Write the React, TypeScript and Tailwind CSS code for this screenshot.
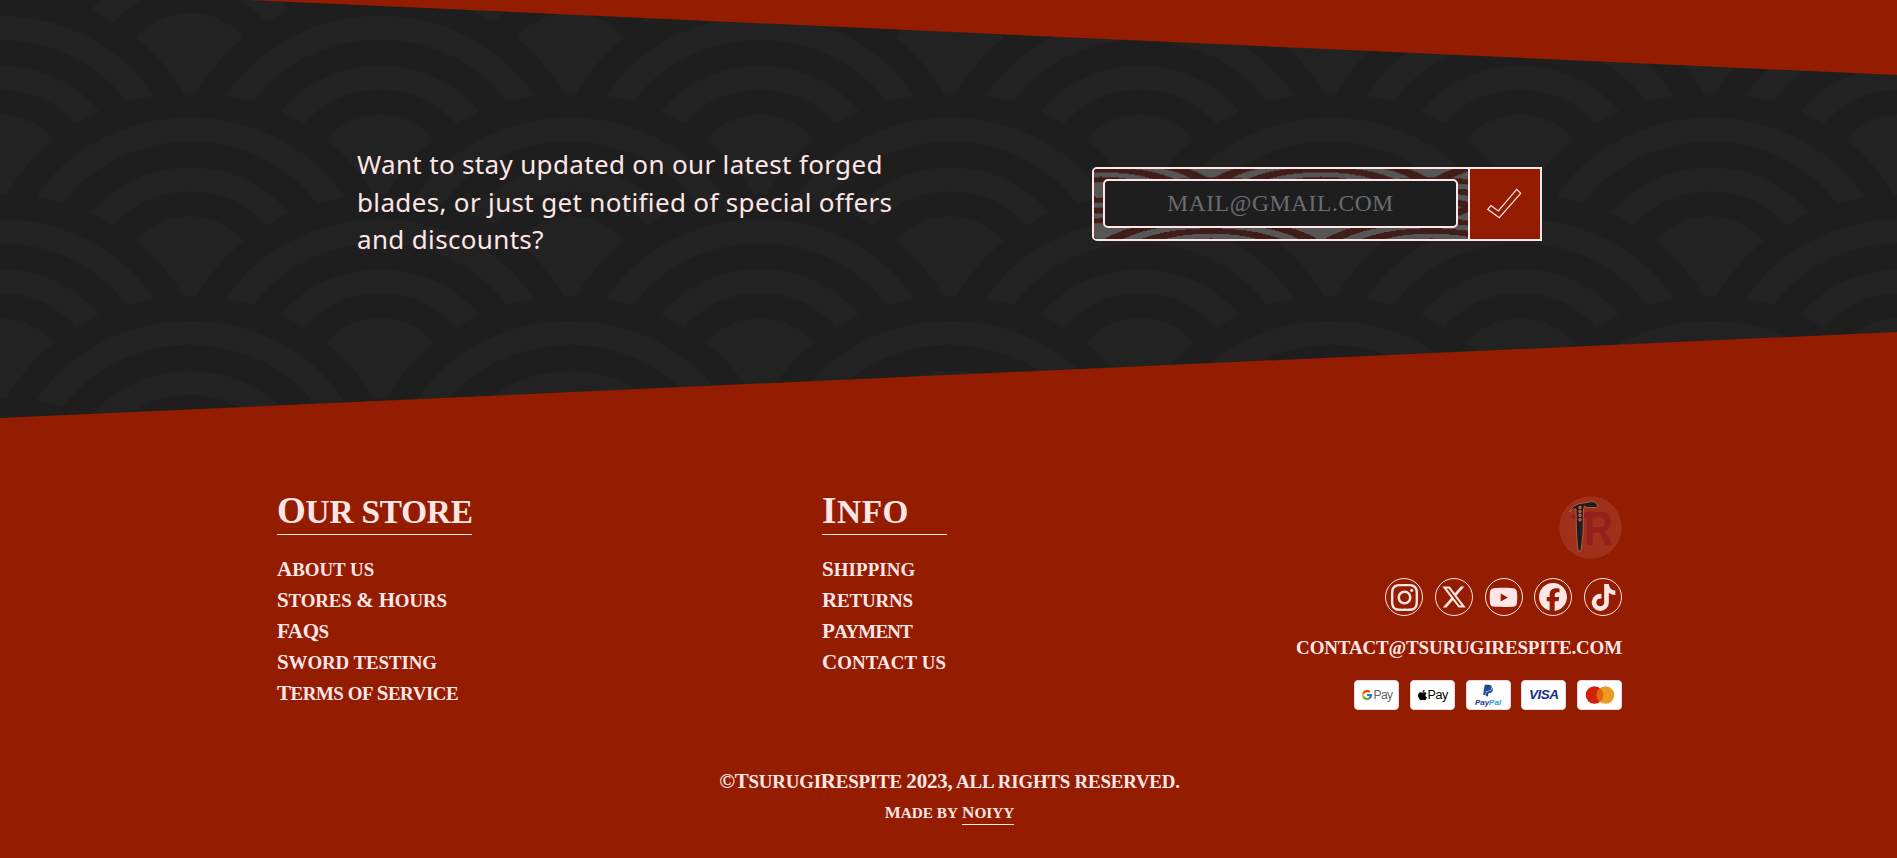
import React from "react";
import { FaInstagram, FaXTwitter, FaYoutube, FaFacebook, FaTiktok, FaApple, FaPaypal } from "react-icons/fa6";
import { FcGoogle } from "react-icons/fc";

/* One wave of the seigaiha tile: concentric ellipses, alternating dark and light. */
function Wave({ cx, cy, light, dark }: { cx: number; cy: number; light: string; dark: string }) {
  const rings = [
    [183.5, dark],
    [158.5, light],
    [135, dark],
    [108.5, light],
    [85, dark],
    [59.5, light],
  ] as const;
  return (
    <g>
      {rings.map(([r, fill]) => (
        <ellipse key={r} cx={cx} cy={cy} rx={r * 1.118} ry={r} fill={fill} />
      ))}
    </g>
  );
}

/* Repeating 380 x 203.4 tile. Lower rows cover the upper ones. */
function Waves({
  id,
  light,
  dark,
  transform,
  crisp,
}: {
  id: string;
  light: string;
  dark: string;
  transform?: string;
  crisp?: boolean;
}) {
  const rows = [-1, 0, 1, 2, 3].map((n) => ({
    cy: 72.8 + n * 101.7,
    xs: n % 2 === 0 ? [-190, 190, 570] : [0, 380],
  }));
  return (
    <svg className="absolute inset-0 h-full w-full" shapeRendering={crisp ? "crispEdges" : "auto"} aria-hidden="true">
      <defs>
        <pattern id={id} width="380" height="203.4" patternUnits="userSpaceOnUse" patternTransform={transform}>
          {rows.map((row) =>
            row.xs.map((x) => <Wave key={`${row.cy}-${x}`} cx={x} cy={row.cy} light={light} dark={dark} />),
          )}
        </pattern>
      </defs>
      <rect width="100%" height="100%" fill={`url(#${id})`} />
    </svg>
  );
}

/* Display lettering: capitals at full size, small letters as slightly lower capitals. */
function Caps({ text, className = "" }: { text: string; className?: string }) {
  const parts = text.match(/[a-z. ]+|[^a-z. ]+/g) ?? [];
  return (
    <span className={`whitespace-nowrap ${className}`}>
      {parts.map((part, i) =>
        /[a-z]/.test(part) ? (
          <span key={i} className="text-[0.9em] uppercase leading-none">
            {part}
          </span>
        ) : (
          part
        ),
      )}
    </span>
  );
}

const store = [
  { label: "About us", track: "tracking-normal" },
  { label: "Stores & Hours", track: "tracking-[-0.14px]" },
  { label: "FAQs", track: "tracking-[-0.4px]" },
  { label: "Sword testing", track: "tracking-[-0.08px]" },
  { label: "Terms of Service", track: "tracking-[-0.43px]" },
];

const info = [
  { label: "Shipping", track: "tracking-[0.1px]" },
  { label: "Returns", track: "tracking-[-0.15px]" },
  { label: "Payment", track: "tracking-[-0.7px]" },
  { label: "Contact us", track: "tracking-[0.1px]" },
];

function LinkColumn({
  title,
  items,
  width,
  track,
}: {
  title: string;
  items: { label: string; track: string }[];
  width: string;
  track: string;
}) {
  return (
    <nav className={`flex flex-col ${width}`}>
      <h2 className="h-[45px] border-b border-[#ffe6e6] text-[37px] leading-[42px]">
        <Caps text={title} className={track} />
      </h2>
      <ul className="mt-[19px] text-[21px] leading-[31px]">
        {items.map((item) => (
          <li key={item.label} className="h-[31px]">
            <a href="#">
              <Caps text={item.label} className={item.track} />
            </a>
          </li>
        ))}
      </ul>
    </nav>
  );
}

function Logo() {
  return (
    <svg viewBox="0 0 63 63" className="h-[63px] w-[63px]" role="img" aria-label="Tsurugi Respite">
      <circle cx="31.5" cy="31.5" r="31.3" fill="#a0301a" />
      <path d="M10 20 L17 24 L17 18Z M24 17 L34 15 L34 20 L24 22Z" fill="#94201c" />
      <text
        x="25"
        y="49"
        fontFamily="Liberation Sans"
        fontWeight="700"
        fontSize="48"
        fill="#94201c"
        textLength="29"
        lengthAdjust="spacingAndGlyphs"
      >
        R
      </text>
      <path
        d="M10.500 16 C13 10 18 7.500 25 7 L33 5.500 L36 6 L39 10 L38 11.500 L28 11.500 L25.500 10 L24.500 13 L24 38 L22 55 L19 55 L17.500 38 L17 13 C14 12.500 12 14 10.500 16Z"
        fill="#1e1e1e"
        stroke="#c06a50"
        strokeWidth="0.8"
      />
      {[11.5, 15.5, 19.5, 23.8].map((y) => (
        <circle key={y} cx="21" cy={y} r="1.4" fill="#c8402c" stroke="#e0836a" strokeWidth="0.5" />
      ))}
    </svg>
  );
}

const socials = [
  { name: "Instagram", icon: <FaInstagram className="h-[31px] w-[31px]" /> },
  { name: "X", icon: <FaXTwitter className="h-[26px] w-[26px]" /> },
  { name: "YouTube", icon: <FaYoutube className="h-[29px] w-[29px]" /> },
  { name: "Facebook", icon: <FaFacebook className="h-[28px] w-[28px]" /> },
  { name: "TikTok", icon: <FaTiktok className="h-[27px] w-[27px]" /> },
];

function Card({ children }: { children: React.ReactNode }) {
  return (
    <span className="flex h-[30px] w-[45px] items-center justify-center rounded-[4px] border border-[#e4d8e4] bg-white">
      {children}
    </span>
  );
}

function Payments() {
  return (
    <div className="flex w-[268px] justify-between font-['Liberation_Sans',sans-serif] font-normal">
      <Card>
        <FcGoogle className="h-[12px] w-[12px]" />
        <span className="ml-[1px] text-[12px] leading-none tracking-[-0.6px] text-[#5f6368]">Pay</span>
      </Card>
      <Card>
        <FaApple className="h-[12px] w-[11px] text-black" />
        <span className="text-[12.5px] leading-none tracking-[-0.4px] text-black">Pay</span>
      </Card>
      <Card>
        <span className="flex flex-col items-center">
          <FaPaypal className="h-[13px] w-[12px] text-[#1d4c94]" />
          <span className="mt-px text-[8px] font-bold italic leading-[9px] text-[#253b80]">
            Pay<span className="text-[#2a9bd7]">Pal</span>
          </span>
        </span>
      </Card>
      <Card>
        <span className="text-[13.5px] font-bold italic leading-none tracking-[-0.5px] text-[#1c2c86]">VISA</span>
      </Card>
      <Card>
        <svg viewBox="0 0 30 18" className="h-[18px] w-[30px]" aria-label="Mastercard">
          <circle cx="9.5" cy="9" r="8.8" fill="#d0210a" />
          <circle cx="20.5" cy="9" r="8.8" fill="#ea9a25" />
          <path d="M15 2.100 A8.800 8.800 0 0 1 15 15.900 A8.800 8.800 0 0 1 15 2.100Z" fill="#e0650e" />
        </svg>
      </Card>
    </div>
  );
}

export default function App() {
  return (
    <div className="flex h-[858px] w-full flex-col overflow-hidden bg-[#941c00] text-[#ffe6e6]">
      <section className="relative h-[418px] shrink-0 [clip-path:polygon(0_0,250px_0,100%_75px,100%_332px,0_418px)]">
        <Waves id="page-waves" light="#222222" dark="#1e1e1e" />
        <div className="relative flex items-start pl-[357px]">
          <p className="mt-[146px] w-[735px] whitespace-nowrap font-['Noto_Sans','Open_Sans',sans-serif] text-[26px] leading-[37.5px] tracking-[0.34px]">
            Want to stay updated on our latest forged
            <br />
            blades, or just get notified of special offers
            <br />
            and discounts?
          </p>
          <form
            className="mt-[167px] flex h-[74px] w-[450px] rounded-l-[5px] border-2 border-[#ffe6e6]"
            onSubmit={(e) => e.preventDefault()}
          >
            <div className="relative w-[374px] overflow-hidden rounded-l-[3px] px-[9px] pt-[10px]">
              <Waves
                id="field-waves"
                light="#565656"
                dark="#411d1a"
                crisp
                transform="translate(7 -10.200) scale(0.579 0.2016)"
              />
              <input
                type="email"
                placeholder="MAIL@GMAIL.COM"
                className="relative block h-[49px] w-[355px] rounded-[5px] border-2 border-[#ffe6e6] bg-[#1e1e1e] text-center font-['Liberation_Serif',serif] text-[23.5px] tracking-[0.6px] outline-none placeholder:text-[#6a6c73]"
              />
            </div>
            <button type="submit" aria-label="Subscribe" className="h-[70px] w-[72px] border-l-2 border-[#ffe6e6] bg-[#941c00]">
              <svg viewBox="0 0 70 70" className="h-[70px] w-[70px]" fill="none" stroke="#ffe6e6" strokeWidth="1.2">
                <path d="M17.700 40.300 L21 36.500 L28.300 42 L46.700 20.300 L50.700 24.300 L29.300 48.700Z" />
              </svg>
            </button>
          </form>
        </div>
      </section>

      <footer className="flex flex-col pl-[277px] pr-[275px] pt-[72px] font-['Liberation_Serif',serif] font-bold">
        <div className="flex h-[275px] items-start justify-between">
          <LinkColumn title="Our store" items={store} width="w-[195px]" track="tracking-[-0.2px]" />
          <LinkColumn title="Info" items={info} width="w-[125px]" track="tracking-[0.6px]" />
          <div className="flex w-[325px] flex-col items-end pt-[6px]">
            <Logo />
            <div className="mt-[19px] flex w-[237px] justify-between">
              {socials.map((s) => (
                <a
                  key={s.name}
                  href="#"
                  aria-label={s.name}
                  className="flex h-[38px] w-[38px] items-center justify-center rounded-full border border-[#ffe6e6]"
                >
                  {s.icon}
                </a>
              ))}
            </div>
            <a href="#" className="mt-[20px] whitespace-nowrap text-[19px] uppercase leading-[24px] tracking-[-0.17px]">
              contact@tsurugirespite.com
            </a>
            <div className="mt-[20px]">
              <Payments />
            </div>
          </div>
        </div>
        <div className="flex flex-col items-center">
          <p className="text-[21px] leading-[32px]">
            <Caps text="©TsurugiRespite 2023, all rights reserved." className="tracking-[-0.2px]" />
          </p>
          <p className="mt-[5px] flex gap-[4px] text-[17px] leading-[22px]">
            <Caps text="Made by" />
            <a href="#" className="border-b border-[#ffe6e6]">
              <Caps text="Noiyy" />
            </a>
          </p>
        </div>
      </footer>
    </div>
  );
}
